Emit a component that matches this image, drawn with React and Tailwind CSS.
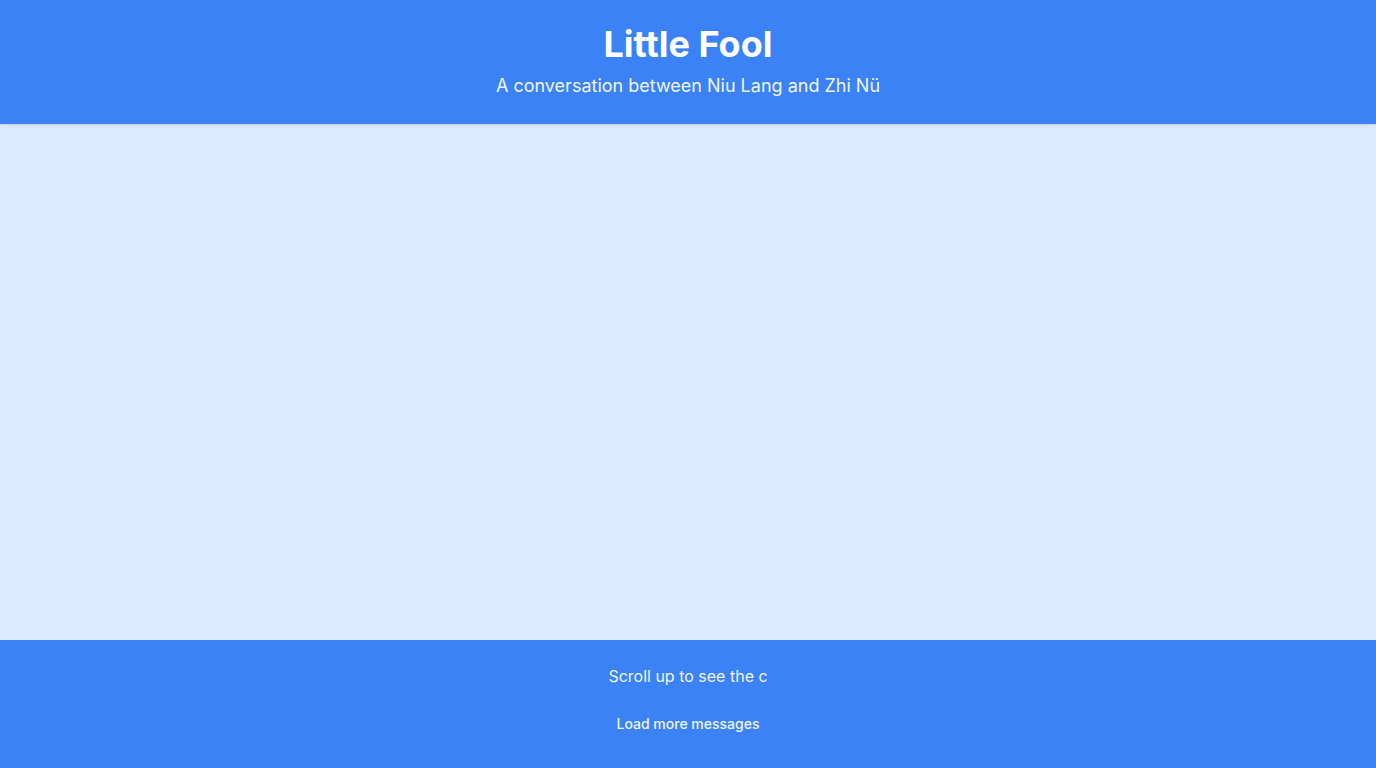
import React from 'react';

const Header = () => (
  <header className="bg-[#3b82f6] shadow-sm py-6 text-center z-10">
    <h1 className="text-4xl font-bold text-white leading-10">Little Fool</h1>
    <p className="mt-2 text-lg text-blue-50 leading-7">A conversation between Niu Lang and Zhi Nü</p>
  </header>
);

const Footer = () => (
  <footer className="bg-[#3b82f6] h-[128px] pt-6 flex flex-col items-center">
    <p className="text-base text-blue-50 leading-6">Scroll up to see the c</p>
    <button className="mt-[18px] px-4 py-2 text-sm font-medium text-blue-50 leading-5">Load more messages</button>
  </footer>
);

export default function App() {
  return (
    <div className="h-screen flex flex-col font-['Inter',sans-serif]">
      <Header />
      <main className="flex-1 bg-[#dbeafe] overflow-y-auto"></main>
      <Footer />
    </div>
  );
}
